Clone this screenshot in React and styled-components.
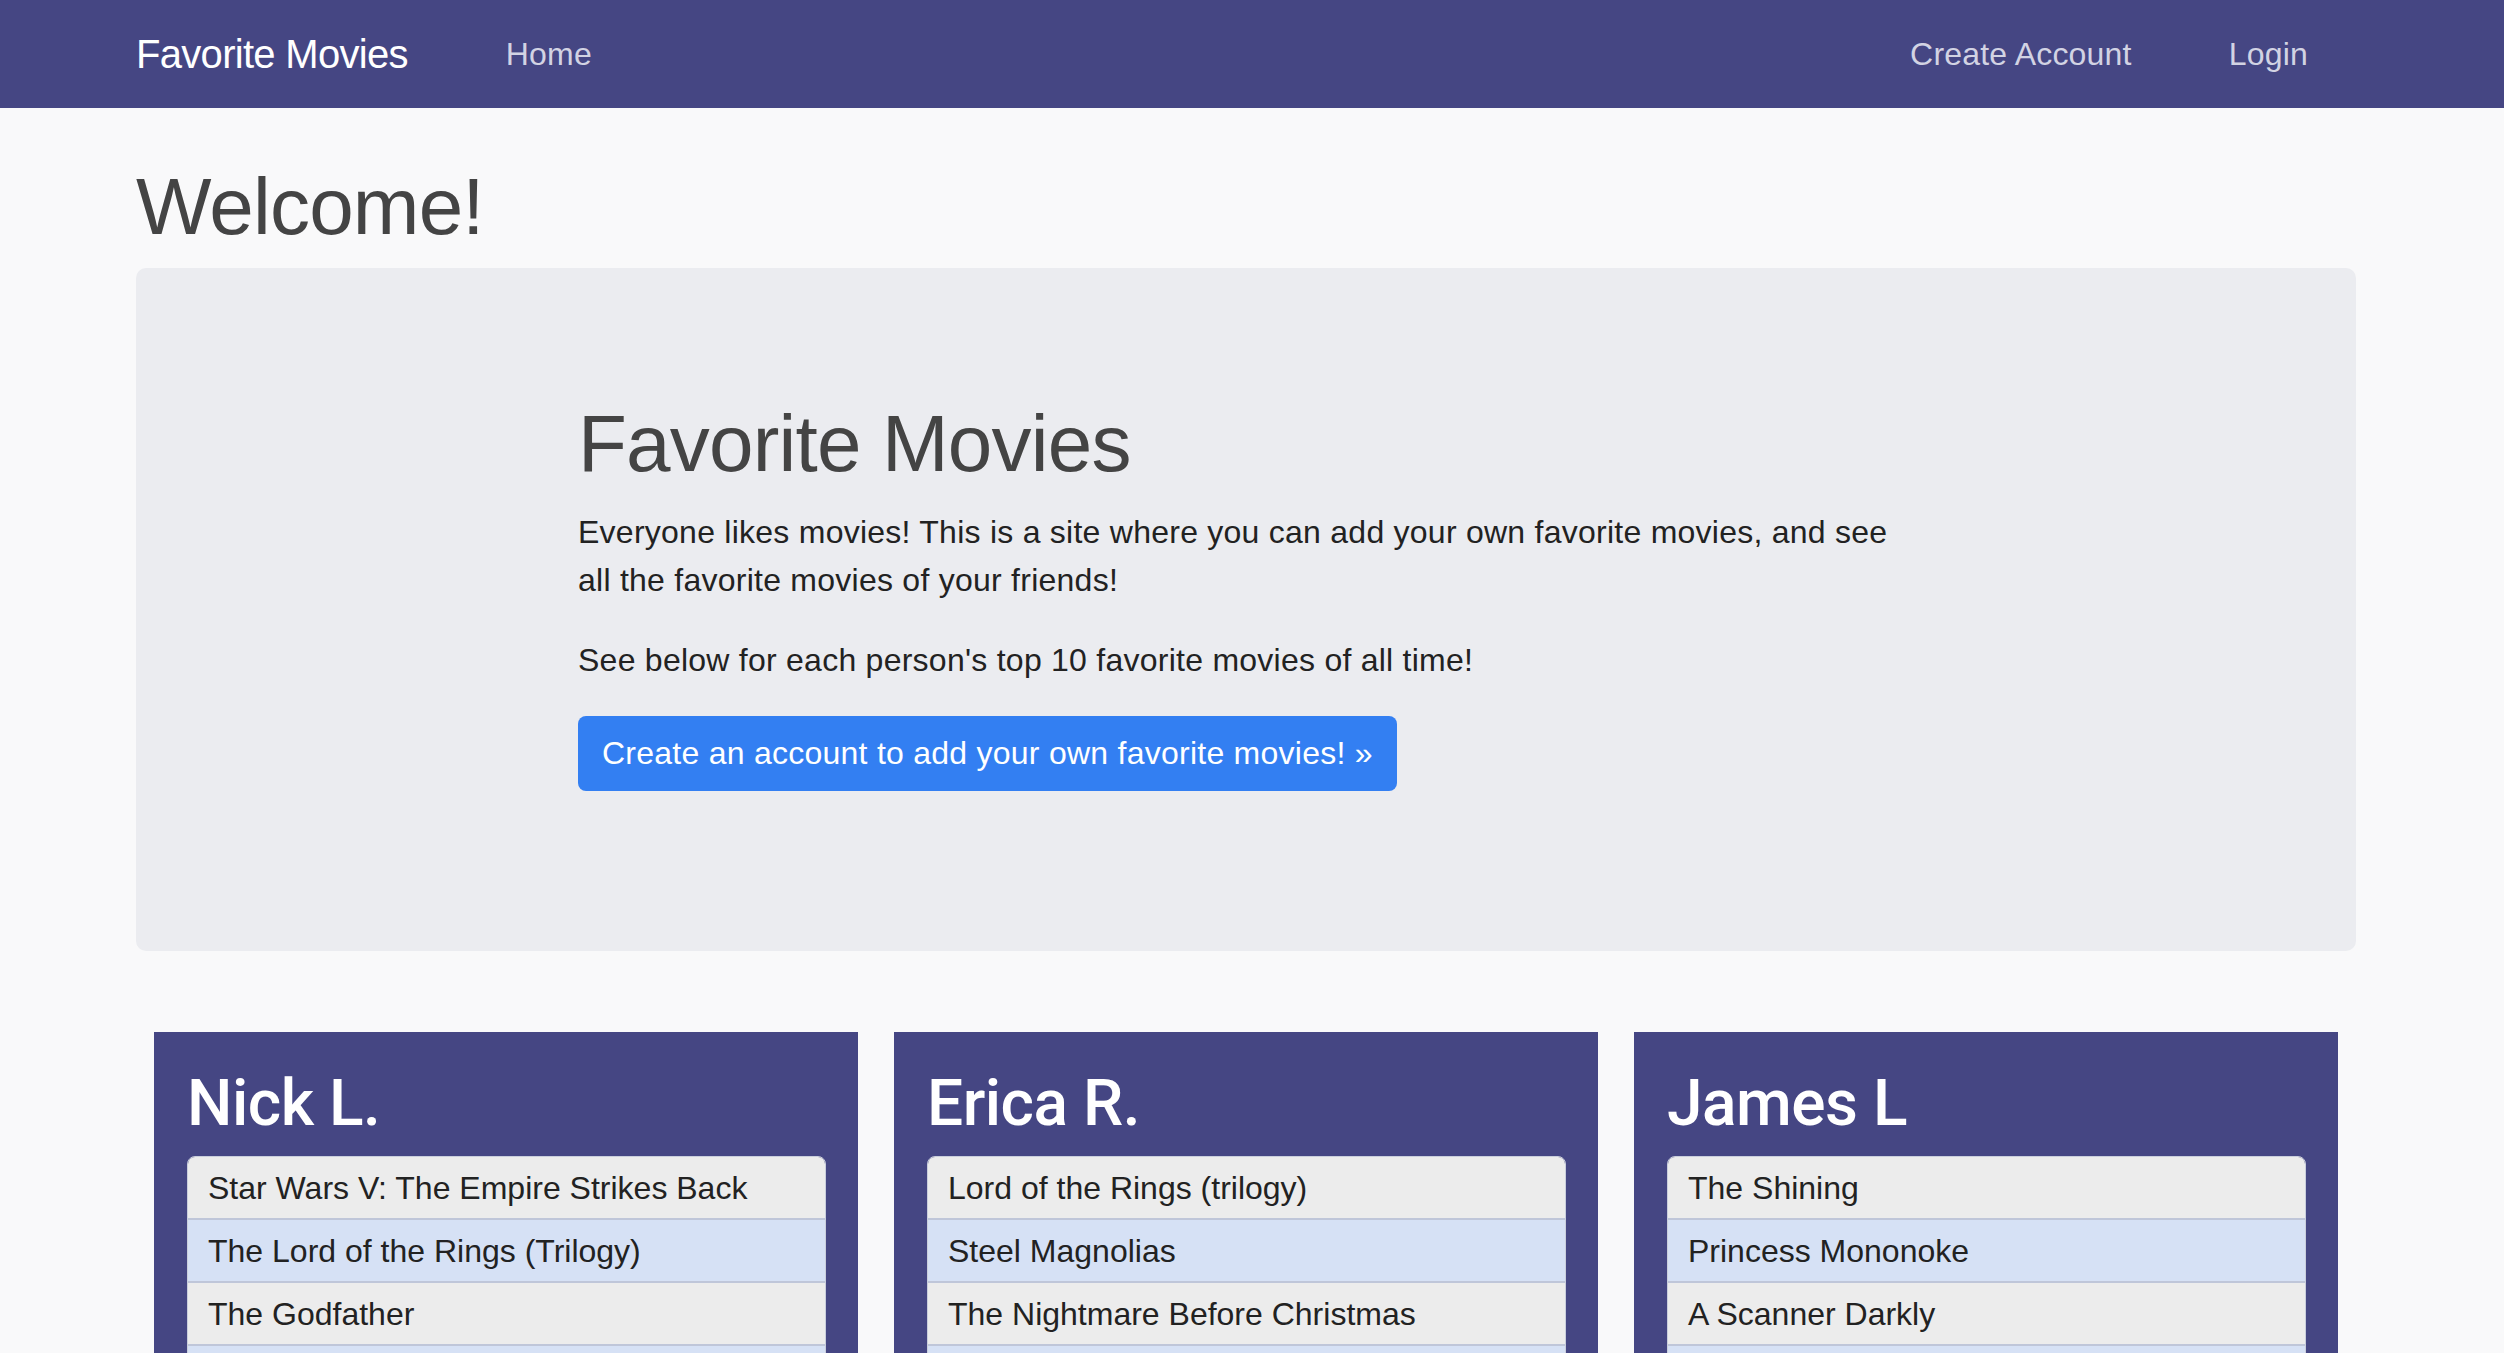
import React from "react"
import styled, { createGlobalStyle } from "styled-components"

const people = [
  {
    name: "Nick L.",
    movies: [
      "Star Wars V: The Empire Strikes Back",
      "The Lord of the Rings (Trilogy)",
      "The Godfather",
      "Pulp Fiction",
      "Back to the Future",
      "Jurassic Park",
      "The Matrix",
      "Alien",
      "Raiders of the Lost Ark",
      "Inception",
    ],
  },
  {
    name: "Erica R.",
    movies: [
      "Lord of the Rings (trilogy)",
      "Steel Magnolias",
      "The Nightmare Before Christmas",
      "Pride and Prejudice",
      "Amelie",
      "Spirited Away",
      "The Princess Bride",
      "Little Women",
      "Clueless",
      "Moana",
    ],
  },
  {
    name: "James L",
    movies: [
      "The Shining",
      "Princess Mononoke",
      "A Scanner Darkly",
      "Blade Runner",
      "2001: A Space Odyssey",
      "Akira",
      "Brazil",
      "Fargo",
      "Primer",
      "Paprika",
    ],
  },
]

const GlobalStyle = createGlobalStyle`
  body {
    margin: 0;
    background: #f9f9fa;
    font-family: "Liberation Sans", Arial, sans-serif;
    color: #212529;
  }
`

export default function App() {
  return (
    <>
      <GlobalStyle />
      <Navbar>
        <Brand>Favorite Movies</Brand>
        <NavLink>Home</NavLink>
        <NavRight>
          <NavLink>Create Account</NavLink>
          <NavLink>Login</NavLink>
        </NavRight>
      </Navbar>
      <Container>
        <Title top={3}>Welcome!</Title>
        <Jumbotron>
          <JumboInner>
            <Title>Favorite Movies</Title>
            <Text>
              Everyone likes movies! This is a site where you can add your own favorite movies, and see all the
              favorite movies of your friends!
            </Text>
            <Text>See below for each person's top 10 favorite movies of all time!</Text>
            <Text>
              <Button>Create an account to add your own favorite movies! &raquo;</Button>
            </Text>
          </JumboInner>
        </Jumbotron>
        <Cards>
          {people.map((p) => (
            <Card key={p.name}>
              <Name>{p.name}</Name>
              <List>
                {p.movies.map((m, i) => (
                  <Item key={m} even={i % 2 === 1}>
                    {m}
                  </Item>
                ))}
              </List>
            </Card>
          ))}
        </Cards>
      </Container>
    </>
  )
}

const Navbar = styled.nav`
  height: 108px;
  background: #454683;
  display: flex;
  align-items: center;
  padding: 0 196px 0 136px;
`

const Brand = styled.div`
  color: #ffffff;
  font-size: 40px;
  letter-spacing: -0.7px;
  margin-right: 98px;
`

const NavLink = styled.a`
  color: #d2d3e3;
  font-size: 32px;
  letter-spacing: 0.2px;
  cursor: pointer;
`

const NavRight = styled.div`
  margin-left: auto;
  display: flex;
  gap: 97px;
`

const Container = styled.div`
  padding: 48px 148px 0 136px;
`

const Title = styled.h1`
  margin: ${(p) => p.top || 0}px 0 ${(p) => 16 - (p.top || 0)}px;
  font-size: 80px;
  font-weight: 400;
  line-height: 1.2;
  letter-spacing: -0.8px;
  color: #444444;
`

const Jumbotron = styled.div`
  background: #ebecf0;
  border-radius: 10px;
  padding: 128px 0;
`

const JumboInner = styled.div`
  margin-left: 442px;
  width: 1310px;
`

const Text = styled.p`
  margin: 0 0 32px;
  font-size: 32px;
  line-height: 1.5;
  letter-spacing: 0.25px;
  color: #222222;
`

const Button = styled.a`
  display: inline-block;
  background: #337ff2;
  color: #ffffff;
  border-radius: 8px;
  padding: 12px 24px;
  font-size: 32px;
  line-height: 1.6;
  letter-spacing: 0.25px;
  cursor: pointer;
`

const Cards = styled.div`
  margin-top: 81px;
  padding: 0 18px;
  display: grid;
  grid-template-columns: repeat(3, 1fr);
  gap: 36px;
`

const Card = styled.div`
  background: #454683;
  padding: 34px 32px 32px 33px;
`

const Name = styled.h2`
  margin: 0 0 13px;
  color: #ffffff;
  font-family: Roboto, "Liberation Sans", sans-serif;
  font-size: 64px;
  font-weight: 500;
  line-height: 1.2;
  letter-spacing: -0.5px;
`

const List = styled.ul`
  list-style: none;
  margin: 0;
  padding: 0;
  border-radius: 8px;
  overflow: hidden;
  border: 1px solid #c9cedc;
`

const Item = styled.li`
  background: ${(p) => (p.even ? "#d6e1f5" : "#ececec")};
  color: #222222;
  font-size: 32px;
  line-height: 48px;
  padding: 7px 20px 6px;
  border-top: 2px solid #bfc6d9;
  &:first-child {
    border-top: none;
  }
`
